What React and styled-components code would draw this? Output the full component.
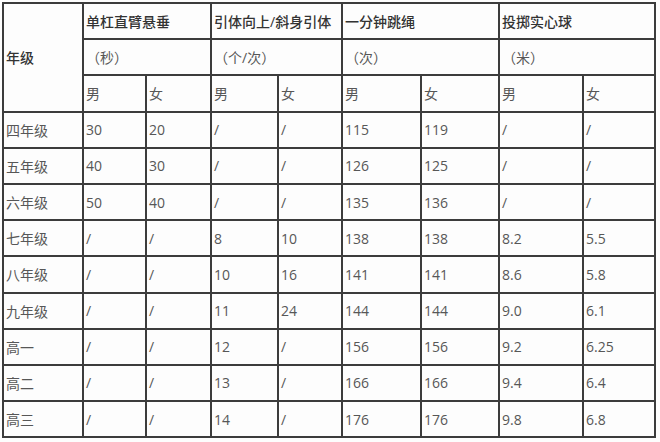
import React from "react";
import styled, { createGlobalStyle } from "styled-components";

const GlobalStyle = createGlobalStyle`
  body {
    margin: 0;
    background: #fdfdfd;
    font-family: "Open Sans", "Noto Sans CJK SC", sans-serif;
  }
`;

const Page = styled.div`
  padding: 2px 0 0 2px;
`;

const Table = styled.table`
  border-collapse: collapse;
  table-layout: fixed;
  width: 654px;
  font-size: 14px;
  color: #555;
`;

const Row = styled.tr`
  height: 36.2px;
`;

const Cell = styled.td`
  border: 2px solid #3c3c3c;
  padding: 0 0 0 2px;
  vertical-align: middle;
  white-space: nowrap;
  overflow: hidden;
  color: ${(p) => (p.$strong ? "#333" : "#575757")};
  font-weight: ${(p) => (p.$strong ? 500 : 400)};
`;

const widths = [80, 63, 65, 67, 64, 79, 78, 84, 72];

const groups = [
  { name: "单杠直臂悬垂", unit: "（秒）" },
  { name: "引体向上/斜身引体", unit: "（个/次）" },
  { name: "一分钟跳绳", unit: "（次）" },
  { name: "投掷实心球", unit: "（米）" },
];

const rows = [
  ["四年级", "30", "20", "/", "/", "115", "119", "/", "/"],
  ["五年级", "40", "30", "/", "/", "126", "125", "/", "/"],
  ["六年级", "50", "40", "/", "/", "135", "136", "/", "/"],
  ["七年级", "/", "/", "8", "10", "138", "138", "8.2", "5.5"],
  ["八年级", "/", "/", "10", "16", "141", "141", "8.6", "5.8"],
  ["九年级", "/", "/", "11", "24", "144", "144", "9.0", "6.1"],
  ["高一", "/", "/", "12", "/", "156", "156", "9.2", "6.25"],
  ["高二", "/", "/", "13", "/", "166", "166", "9.4", "6.4"],
  ["高三", "/", "/", "14", "/", "176", "176", "9.8", "6.8"],
];

export default function App() {
  return (
    <Page>
      <GlobalStyle />
      <Table>
        <colgroup>
          {widths.map((w, i) => (
            <col key={i} style={{ width: w }} />
          ))}
        </colgroup>
        <tbody>
          <Row>
            <Cell rowSpan={3} $strong>
              年级
            </Cell>
            {groups.map((g) => (
              <Cell key={g.name} colSpan={2} $strong>
                {g.name}
              </Cell>
            ))}
          </Row>
          <Row>
            {groups.map((g) => (
              <Cell key={g.name} colSpan={2}>
                {g.unit}
              </Cell>
            ))}
          </Row>
          <Row>
            {groups.map((g) => (
              <React.Fragment key={g.name}>
                <Cell>男</Cell>
                <Cell>女</Cell>
              </React.Fragment>
            ))}
          </Row>
          {rows.map((r) => (
            <Row key={r[0]}>
              {r.map((v, i) => (
                <Cell key={i}>{v}</Cell>
              ))}
            </Row>
          ))}
        </tbody>
      </Table>
    </Page>
  );
}
